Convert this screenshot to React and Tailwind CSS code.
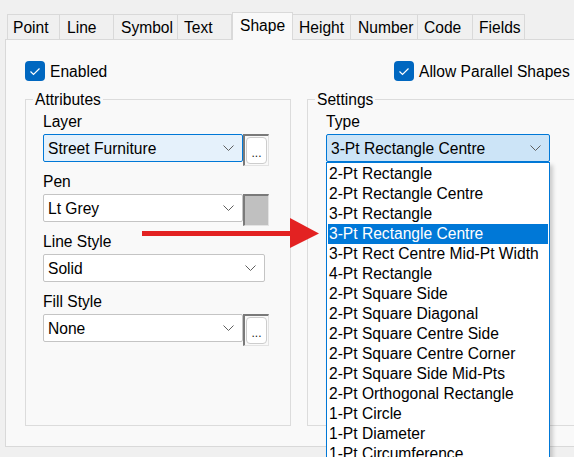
import React from "react";

const Chevron = () => (
  <svg width="11" height="6" viewBox="0 0 11 6" className="shrink-0">
    <path d="M0.5 0.5 L5.5 5.5 L10.5 0.5" fill="none" stroke="#5f5f5f" strokeWidth="1" />
  </svg>
);

const Check = () => (
  <svg width="12" height="9" viewBox="0 0 12 9">
    <path d="M1.5 4.5 L4.5 7.5 L10.5 1.5" fill="none" stroke="#ffffff" strokeWidth="1.2" />
  </svg>
);

function CheckBox({ label }) {
  return (
    <div className="flex items-center h-[20px]">
      <div className="w-[20px] h-[20px] rounded-[4px] bg-[#0067c0] flex items-center justify-center">
        <Check />
      </div>
      <span className="relative top-[1px] ml-[5px] leading-[20px]">{label}</span>
    </div>
  );
}

function Combo({ value, className }) {
  return (
    <div className={"h-[28px] flex items-center justify-between pl-[4px] pr-[8px] border rounded-[2px] " + className}>
      <span className="relative top-[1px] leading-[20px] whitespace-nowrap">{value}</span>
      <Chevron />
    </div>
  );
}

function Ellipsis() {
  return (
    <div className="w-[26px] h-[32px] border-t-2 border-l-2 border-r border-b border-t-[#7a7a7a] border-l-[#7a7a7a] border-r-[#e3e3e3] border-b-[#e3e3e3] p-[1px] bg-[#f9f9f9]">
      <div className="w-full h-full bg-white border border-[#cdcdcd] rounded-[4px] flex items-end justify-center text-[12px] leading-[16px] text-[#1a1a1a] pb-[2px]">
        ...
      </div>
    </div>
  );
}

function Swatch() {
  return (
    <div className="w-[26px] h-[32px] bg-[#c0c0c0] border-t-2 border-l-2 border-r border-b border-t-[#7a7a7a] border-l-[#7a7a7a] border-r-[#e3e3e3] border-b-[#e3e3e3]" />
  );
}

function Label({ children }) {
  return (
    <div className="h-[20px] leading-[20px]">
      <span className="relative top-[1px]">{children}</span>
    </div>
  );
}

const tabs = [
  ["Point", "w-[53px] pl-[5px]"],
  ["Line", "w-[54px] pl-[7px]"],
  ["Symbol", "w-[64px] pl-[7px]"],
  ["Text", "w-[54px] pl-[6px]"],
  ["Shape", "w-[61px] pl-[7px]"],
  ["Height", "w-[58px] pl-[6px]"],
  ["Number", "w-[67px] pl-[7px]"],
  ["Code", "w-[55px] pl-[6px]"],
  ["Fields", "w-[52px] pl-[6px]"],
];

const items = [
  "2-Pt Rectangle",
  "2-Pt Rectangle Centre",
  "3-Pt Rectangle",
  "3-Pt Rectangle Centre",
  "3-Pt Rect Centre Mid-Pt Width",
  "4-Pt Rectangle",
  "2-Pt Square Side",
  "2-Pt Square Diagonal",
  "2-Pt Square Centre Side",
  "2-Pt Square Centre Corner",
  "2-Pt Square Side Mid-Pts",
  "2-Pt Orthogonal Rectangle",
  "1-Pt Circle",
  "1-Pt Diameter",
  "1-Pt Circumference",
];

export default function App() {
  return (
    <div
      className="relative w-[574px] h-[457px] overflow-hidden bg-[#f0f0f0] text-[#000] text-[15.6px]"
      style={{ fontFamily: '"Liberation Sans", Arial, sans-serif' }}
    >
      {/* Tabs */}
      <div className="relative z-10 h-[40px] pt-[12px] pl-[7px] flex items-end">
        {tabs.map(([t, cls], i) =>
          t === "Shape" ? (
            <div
              key={t}
              className={"h-[28px] bg-[#f9f9f9] border-t border-l border-r border-[#d9d9d9] leading-[25px] " + cls}
            >
              {t}
            </div>
          ) : (
            <div
              key={t}
              className={
                "h-[25px] mb-[1px] bg-[#f0f0f0] border-t border-r border-[#d9d9d9] leading-[25px] " +
                (i === 0 ? "border-l " : "") +
                cls
              }
            >
              {t}
            </div>
          )
        )}
      </div>

      {/* Panel */}
      <div className="-mt-[1px] ml-[5px] w-[600px] h-[408px] border border-[#d9d9d9] bg-[#f9f9f9] pl-[19px] pt-[21px]">
        <div className="flex">
          <div className="w-[369px]">
            <CheckBox label="Enabled" />
          </div>
          <CheckBox label="Allow Parallel Shapes" />
        </div>

        <div className="mt-[8px] flex">
          <fieldset className="w-[266px] h-[337px] border border-[#dcdcdc]">
            <legend className="ml-[7px] px-[2px] leading-[20px]">
              <span className="relative top-[1px]">Attributes</span>
            </legend>
            <div className="pl-[17px] pt-[2px]">
              <div className="h-[60px]">
                <Label>Layer</Label>
                <div className="mt-[3px] flex items-start">
                  <Combo value="Street Furniture" className="w-[200px] bg-[#e5f1fb] border-[#0078d7]" />
                  <Ellipsis />
                </div>
              </div>
              <div className="h-[60px]">
                <Label>Pen</Label>
                <div className="mt-[3px] flex items-start">
                  <Combo value="Lt Grey" className="w-[200px] bg-white border-[#c4c4c4]" />
                  <Swatch />
                </div>
              </div>
              <div className="h-[60px]">
                <Label>Line Style</Label>
                <div className="mt-[3px] flex items-start">
                  <Combo value="Solid" className="w-[222px] bg-white border-[#c4c4c4]" />
                </div>
              </div>
              <div className="h-[60px]">
                <Label>Fill Style</Label>
                <div className="mt-[3px] flex items-start">
                  <Combo value="None" className="w-[200px] bg-white border-[#c4c4c4]" />
                  <Ellipsis />
                </div>
              </div>
            </div>
          </fieldset>

          <fieldset className="ml-[16px] w-[290px] h-[337px] border border-[#dcdcdc]">
            <legend className="ml-[7px] px-[2px] leading-[20px]">
              <span className="relative top-[1px]">Settings</span>
            </legend>
            <div className="pl-[18px] pt-[2px]">
              <Label>Type</Label>
              <div className="relative mt-[3px] w-[224px]">
                <Combo value="3-Pt Rectangle Centre" className="w-[224px] bg-[#cce4f7] border-[#0078d7]" />
                <div className="absolute left-0 top-[28px] z-20 w-[224px] h-[320px] bg-white border border-[#0078d7] p-[1px] shadow-[3px_3px_4px_rgba(0,0,0,0.18)]">
                  {items.map((it) => (
                    <div
                      key={it}
                      className={
                        "h-[20px] leading-[20px] pl-[1px] whitespace-nowrap " +
                        (it === "3-Pt Rectangle Centre" ? "bg-[#0078d7] text-white" : "")
                      }
                    >
                      {it}
                    </div>
                  ))}
                </div>
              </div>
            </div>
          </fieldset>
        </div>
      </div>

      {/* Red annotation arrow */}
      <svg className="absolute left-0 top-0 z-30 pointer-events-none" width="574" height="457">
        <rect x="142" y="231" width="150" height="5" fill="#e32222" />
        <polygon points="290,218 319,233.5 290,248" fill="#e32222" />
      </svg>
    </div>
  );
}
